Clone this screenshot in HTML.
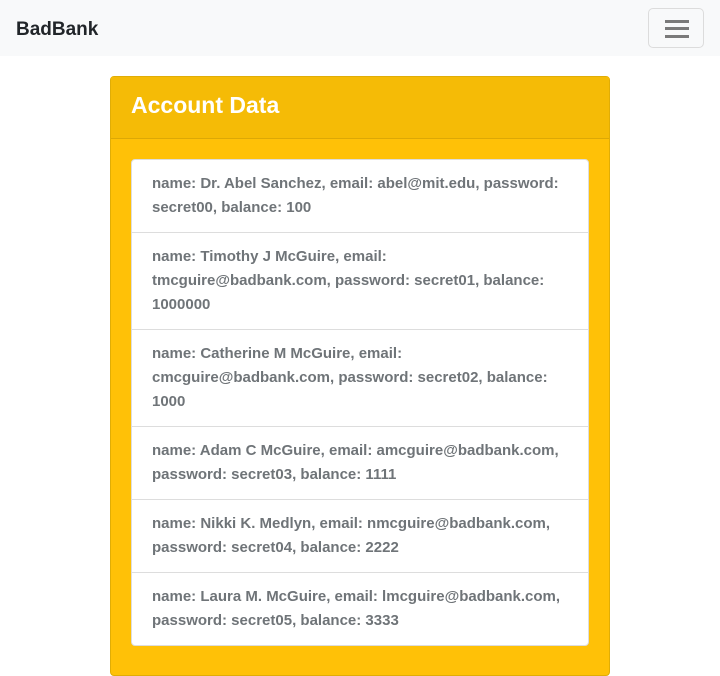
<!DOCTYPE html>
<html><head><meta charset="utf-8"><style>
*{box-sizing:border-box;margin:0;padding:0}
body{width:720px;height:660px;overflow:hidden;background:#fff;font-family:"Liberation Sans",sans-serif;}
.nav{height:56px;background:#f8f9fa;position:relative}
.brand{position:absolute;left:16px;top:19px;font-size:19px;font-weight:bold;color:#212529}
.tog{position:absolute;left:648px;top:8px;width:56px;height:40px;border:1px solid #dcdcdc;border-radius:5px}
.tog i{position:absolute;left:16px;width:24px;height:3px;background:#7a7a7a}
.card{position:absolute;left:110px;top:76px;width:500px;height:600px;background:#ffc107;border:1px solid #e0ad06;border-radius:4px}
.hd{height:62px;background:#f5bb06;border-bottom:1px solid #dca806;color:#fff;font-size:23px;font-weight:bold;padding:15px 20px}
.list{position:absolute;left:20px;top:82px;width:458px;background:#fff;border-radius:4px;border:1px solid #ddd}
.it{padding:12px 20px;border-top:1px solid #ddd;color:#6f7478;font-size:15px;font-weight:bold;line-height:24px;white-space:nowrap}
.it:first-child{border-top:none}
</style></head><body>
<div class="nav"><div class="brand">BadBank</div><div class="tog"><i style="top:11px"></i><i style="top:18px"></i><i style="top:26px"></i></div></div>
<div class="card"><div class="hd">Account Data</div>
<div class="list">
<div class="it">name: Dr. Abel Sanchez, email: abel@mit.edu, password:<br>secret00, balance: 100</div>
<div class="it">name: Timothy J McGuire, email:<br>tmcguire@badbank.com, password: secret01, balance:<br>1000000</div>
<div class="it">name: Catherine M McGuire, email:<br>cmcguire@badbank.com, password: secret02, balance:<br>1000</div>
<div class="it">name: Adam C McGuire, email: amcguire@badbank.com,<br>password: secret03, balance: 1111</div>
<div class="it">name: Nikki K. Medlyn, email: nmcguire@badbank.com,<br>password: secret04, balance: 2222</div>
<div class="it">name: Laura M. McGuire, email: lmcguire@badbank.com,<br>password: secret05, balance: 3333</div>
</div></div>
</body></html>
